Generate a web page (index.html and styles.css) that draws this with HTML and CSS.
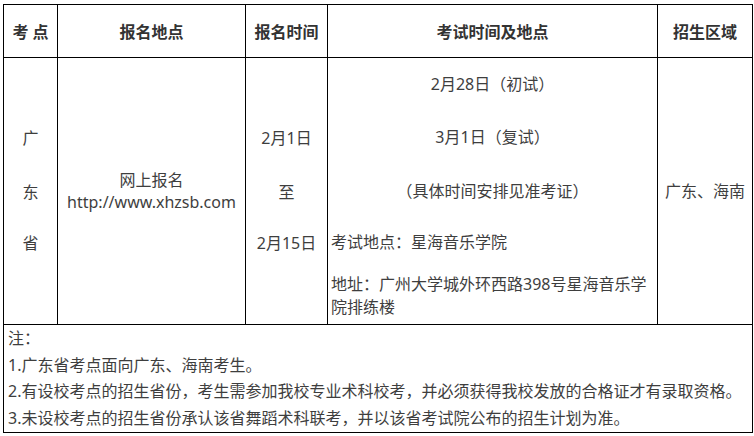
FILE: index.html
```html
<!DOCTYPE html>
<html lang="zh-CN">
<head>
<meta charset="utf-8">
<title>考点</title>
<link rel="stylesheet" href="styles.css">
</head>
<body>
<table class="exam">
  <colgroup>
    <col class="c1"><col class="c2"><col class="c3"><col class="c4"><col class="c5">
  </colgroup>
  <thead>
    <tr class="head">
      <th>考 点</th>
      <th>报名地点</th>
      <th>报名时间</th>
      <th>考试时间及地点</th>
      <th>招生区域</th>
    </tr>
  </thead>
  <tbody>
    <tr class="main">
      <td class="center">
        <p class="l1">广</p>
        <p class="l2">东</p>
        <p>省</p>
      </td>
      <td class="center reg">
        <p>网上报名</p>
        <p>http://www.xhzsb.com</p>
      </td>
      <td class="center">
        <p class="l1">2月1日</p>
        <p class="l2">至</p>
        <p>2月15日</p>
      </td>
      <td class="exam-cell">
        <p class="center-text m1">2月28日（初试）</p>
        <p class="center-text m2">3月1日（复试）</p>
        <p class="center-text m3">（具体时间安排见准考证）</p>
        <p class="m4">考试地点：星海音乐学院</p>
        <p>地址：广州大学城外环西路398号星海音乐学院排练楼</p>
      </td>
      <td class="center">广东、海南</td>
    </tr>
    <tr class="notes">
      <td colspan="5">
        <p>注：</p>
        <p>1.广东省考点面向广东、海南考生。</p>
        <p>2.有设校考点的招生省份，考生需参加我校专业术科校考，并必须获得我校发放的合格证才有录取资格。</p>
        <p>3.未设校考点的招生省份承认该省舞蹈术科联考，并以该省考试院公布的招生计划为准。</p>
      </td>
    </tr>
  </tbody>
</table>
</body>
</html>
```

FILE: styles.css
```css
html, body {
  margin: 0;
  padding: 0;
  background: #fff;
}
body {
  padding: 4px 0 0 3px;
  font-family: "Noto Sans", "Noto Sans CJK SC", sans-serif;
  font-size: 16px;
  color: #3e3e3e;
}
p {
  margin: 0;
}
.exam {
  border-collapse: collapse;
  width: 749px;
  table-layout: fixed;
}
.c1 { width: 54px; }
.c2 { width: 188px; }
.c3 { width: 82px; }
.c4 { width: 330px; }
.c5 { width: 95px; }
.exam th,
.exam td {
  border: 1px solid #000;
  padding: 0 3px;
}
.exam th {
  height: 52px;
  font-weight: bold;
  text-align: center;
  vertical-align: middle;
  color: #333;
}
.main td {
  height: 266px;
  line-height: 23px;
  vertical-align: middle;
}
.center {
  text-align: center;
}
.center-text {
  text-align: center;
}
.l1 { margin-bottom: 31px; }
.l2 { margin-bottom: 28px; }
.main td.reg {
  line-height: 22px;
}
.main td.exam-cell {
  vertical-align: top;
}
.m1 { margin-top: 15px; margin-bottom: 30px; }
.m2 { margin-bottom: 31px; }
.m3 { margin-bottom: 28px; }
.m4 { margin-bottom: 19px; }
.notes td {
  line-height: 26.7px;
  padding: 0 4px;
  vertical-align: top;
}
```
